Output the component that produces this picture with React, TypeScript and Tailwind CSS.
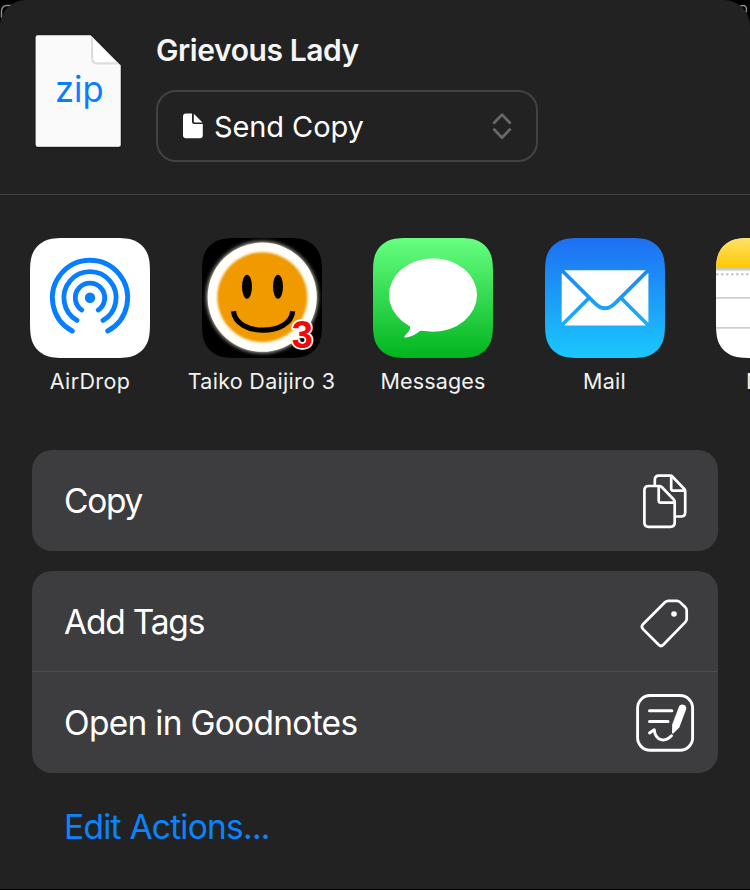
import type { ReactNode } from "react";

// Rounded square with continuous curvature corners.
function squircle(s: number, r: number): string {
  const a = 1.5287 * r, b = 1.0885 * r, c = 0.8684 * r, d = 0.6315 * r;
  const e = 0.0749 * r, f = 0.3728 * r, g = 0.1691 * r;
  return [
    `M${a} 0H${s - a}`,
    `C${s - b} 0 ${s - c} 0 ${s - d} ${e}`,
    `C${s - f} ${g} ${s - g} ${f} ${s - e} ${d}`,
    `C${s} ${c} ${s} ${b} ${s} ${a}V${s - a}`,
    `C${s} ${s - b} ${s} ${s - c} ${s - e} ${s - d}`,
    `C${s - g} ${s - f} ${s - f} ${s - g} ${s - d} ${s - e}`,
    `C${s - c} ${s} ${s - b} ${s} ${s - a} ${s}H${a}`,
    `C${b} ${s} ${c} ${s} ${d} ${s - e}`,
    `C${f} ${s - g} ${g} ${s - f} ${e} ${s - d}`,
    `C0 ${s - c} 0 ${s - b} 0 ${s - a}V${a}`,
    `C0 ${b} 0 ${c} ${e} ${d}`,
    `C${g} ${f} ${f} ${g} ${d} ${e}`,
    `C${c} 0 ${b} 0 ${a} 0Z`,
  ].join("");
}

const tile = squircle(120, 27);

function Tile({ id, children }: { id: string; children: ReactNode }) {
  return (
    <svg width="120" height="120" viewBox="0 0 120 120" className="block shrink-0">
      <defs>
        <clipPath id={id}>
          <path d={tile} />
        </clipPath>
      </defs>
      <g clipPath={`url(#${id})`}>{children}</g>
    </svg>
  );
}

function AirDropIcon() {
  return (
    <Tile id="airdrop">
      <rect width="120" height="120" fill="#fff" />
      <circle cx="60" cy="59.8" r="5.2" fill="#067eff" />
      <g fill="none" stroke="#067eff" strokeWidth="4.9" strokeLinecap="round">
        <path d="M42.3 93A37.6 37.6 0 1 1 77.7 93" />
        <path d="M47 82.4A26.1 26.1 0 1 1 73 82.4" />
        <path d="M51.8 72A14.7 14.7 0 1 1 68.2 72" />
      </g>
    </Tile>
  );
}

function TaikoIcon() {
  return (
    <Tile id="taiko">
      <defs>
        <filter id="glow" x="-20%" y="-20%" width="140%" height="140%">
          <feGaussianBlur stdDeviation="2.2" />
        </filter>
        <filter id="soft" x="-20%" y="-20%" width="140%" height="140%">
          <feGaussianBlur stdDeviation="0.9" />
        </filter>
      </defs>
      <rect width="120" height="120" fill="#000" />
      <circle cx="60.2" cy="59.2" r="55.2" fill="#d8d8d0" filter="url(#glow)" />
      <circle cx="60.2" cy="59.2" r="54.6" fill="#fffef8" />
      <circle cx="60.3" cy="59.2" r="45" fill="#f09a05" filter="url(#soft)" />
      <ellipse cx="45" cy="48.8" rx="5" ry="12" fill="#000" />
      <ellipse cx="76" cy="48.8" rx="5" ry="12" fill="#000" />
      <path d="M31.500 73.300C34 98.500 88.500 98.500 90.700 73.300" fill="none" stroke="#000" strokeWidth="5.2" />
      <text
        x="100.4"
        y="110.2"
        textAnchor="middle"
        fontFamily="'Liberation Sans', Arial, sans-serif"
        fontSize="38"
        fontWeight="700"
        fill="#f60509"
        stroke="#fff"
        strokeWidth="3.4"
        strokeLinejoin="round"
        paintOrder="stroke"
      >
        3
      </text>
    </Tile>
  );
}

function MessagesIcon() {
  return (
    <Tile id="messages">
      <defs>
        <linearGradient id="green" x1="0" y1="0" x2="0" y2="1">
          <stop offset="0" stopColor="#67ff81" />
          <stop offset="1" stopColor="#01b41f" />
        </linearGradient>
      </defs>
      <rect width="120" height="120" fill="url(#green)" />
      <ellipse cx="60" cy="57" rx="44" ry="36.7" fill="#fff" />
      <path d="M36 85.5C38.500 89 37 93 31.700 97.800C30.700 99 31.300 99.800 33 99.500C39 98.600 43.500 95.800 46.500 93.200C48 92.300 49.500 92.300 52 92.800L50 80Z" fill="#fff" />
    </Tile>
  );
}

function MailIcon() {
  return (
    <Tile id="mail">
      <defs>
        <linearGradient id="blue" gradientUnits="userSpaceOnUse" x1="0" y1="0" x2="0" y2="120">
          <stop offset="0" stopColor="#1e6ff2" />
          <stop offset="1" stopColor="#1ac8fd" />
        </linearGradient>
      </defs>
      <rect width="120" height="120" fill="url(#blue)" />
      <rect x="16.7" y="32.3" width="86.7" height="55.2" rx="4" fill="#fff" />
      <g fill="none" strokeWidth="3.8">
        <path stroke="url(#blue)" d="M16 31.500L50 65.300Q60 75 70 65.300L104 31.500" />
        <path stroke="url(#blue)" d="M16 88L43.500 60.500M104 88L76.500 60.500" />
      </g>
    </Tile>
  );
}

function NotesIcon() {
  return (
    <Tile id="notes">
      <defs>
        <linearGradient id="yellow" x1="0" y1="0" x2="0" y2="1">
          <stop offset="0" stopColor="#ffe168" />
          <stop offset="1" stopColor="#ffc800" />
        </linearGradient>
        <linearGradient id="shade" x1="0" y1="0" x2="0" y2="1">
          <stop offset="0" stopColor="#b5b5b5" />
          <stop offset="1" stopColor="#fff" />
        </linearGradient>
      </defs>
      <rect width="120" height="120" fill="#fff" />
      <rect width="120" height="30.3" fill="url(#yellow)" />
      <rect y="30.3" width="120" height="3.5" fill="url(#shade)" />
      <path d="M1.300 36.300H120" stroke="#c4c4c6" strokeWidth="2.6" strokeLinecap="round" strokeDasharray="0 5" />
      <path d="M0 59.800H120M0 89.800H120" stroke="#cfcfd1" strokeWidth="1.7" />
    </Tile>
  );
}

function ZipFile() {
  return (
    <svg width="98" height="124" viewBox="29 29 98 124" className="block shrink-0">
      <defs>
        <filter id="drop" x="-10%" y="-10%" width="120%" height="120%">
          <feDropShadow dx="0" dy="0.5" stdDeviation="1.8" floodColor="#000" floodOpacity="0.55" />
        </filter>
      </defs>
      <path
        d="M37.700 35.300H90.500L120.700 65.400V144.700Q120.700 146.700 118.700 146.700H37.700Q35.700 146.700 35.700 144.700V37.300Q35.700 35.300 37.700 35.300Z"
        fill="#fafafa"
        filter="url(#drop)"
      />
      <path d="M91.800 36.800V59Q91.800 64 97 64H119L120 66Z" fill="#fff" />
      <path d="M92.100 37.500V58.500Q92.100 63.300 97 63.300H118" fill="none" stroke="#dedede" strokeWidth="2.2" />
      <text
        x="55"
        y="101.5"
        fontFamily="Inter, sans-serif"
        fontSize="35.5"
        textLength="48.5"
        lengthAdjust="spacingAndGlyphs"
        fill="#0a7dff"
      >
        zip
      </text>
    </svg>
  );
}

function CopyIcon() {
  return (
    <svg width="60" height="62" viewBox="635 470 60 62" className="block" fill="none" stroke="#fff" strokeWidth="2.7" strokeLinecap="round" strokeLinejoin="round">
      <path d="M654.800 484V480Q654.800 475.700 659 475.700H670.500Q671.500 475.700 672.500 476.700L684.300 489Q685.200 490 685.200 491.500V512.300Q685.200 516.500 681 516.500H677" />
      <path d="M671.200 476.500V488.500Q671.200 490.700 673.400 490.700H684.500" />
      <path d="M659.500 486Q660.700 486 661.700 487L673.500 499.300Q674.700 500.500 674.700 502V522.500Q674.700 526.800 670.400 526.800H648.700Q644.400 526.800 644.400 522.500V490.300Q644.400 486 648.700 486Z" />
      <path d="M658.700 487V500.500Q658.700 502.700 660.900 502.700H674" />
    </svg>
  );
}

function TagIcon() {
  return (
    <svg width="60" height="60" viewBox="635 591.5 60 60" className="block">
      <path
        d="M665.200 602.500Q666.600 601.300 668.400 601.300H676.800Q678.700 601.300 680 602.600L685.300 607.800Q686.700 609.200 686.700 611V619.200Q686.700 621.200 685.300 622.600L663.300 645.300Q661 647.600 658.700 645.300L643 629.600Q640.700 627.200 643 624.800Z"
        fill="none"
        stroke="#fff"
        strokeWidth="2.7"
        strokeLinejoin="round"
      />
      <circle cx="674" cy="614.5" r="2.8" fill="#fff" />
    </svg>
  );
}

function GoodnotesIcon() {
  return (
    <svg width="60" height="60" viewBox="635 693 60 60" className="block" fill="none" stroke="#fff" strokeLinecap="round" strokeLinejoin="round">
      <rect x="637.6" y="695.5" width="55" height="54.8" rx="12.5" strokeWidth="2.9" />
      <path d="M649.500 710.700H671.800M649.500 721.400H668" strokeWidth="3" />
      <path d="M649.500 733L654.200 729.700C655.500 742 665.500 742 671.500 735.800" strokeWidth="2.9" />
      <path d="M678.900 706.800C680 704.200 682.500 704.100 684.500 705.100C686.300 706.100 686.600 707.900 686 709.800L679.300 727.500L673.300 733.400Q672.100 733.900 672 732.400L672.200 724.500Z" fill="#fff" stroke="none" />
    </svg>
  );
}

const apps = [
  { name: "AirDrop", icon: <AirDropIcon />, spacing: "tracking-[0.35px]" },
  { name: "Taiko Daijiro 3", icon: <TaikoIcon />, spacing: "tracking-[0.3px]" },
  { name: "Messages", icon: <MessagesIcon />, spacing: "tracking-[0.15px]" },
  { name: "Mail", icon: <MailIcon />, spacing: "tracking-[0.3px]" },
  { name: "Notes", icon: <NotesIcon />, spacing: "tracking-[0px]" },
];

function Row({ label, icon, className }: { label: ReactNode; icon: ReactNode; className: string }) {
  return (
    <button className={`flex w-full items-center justify-between pl-[32px] pr-[23px] text-left ${className}`}>
      {label}
      {icon}
    </button>
  );
}

export default function App() {
  return (
    <div className="relative h-[890px] w-[750px] overflow-hidden bg-black font-['Inter',sans-serif] text-white">
      <svg className="absolute left-0 top-0" width="750" height="20" fill="none" stroke="#8b8b8d" strokeWidth="1.5">
        <path d="M1.500 18V11Q2 5.500 7 5.500H12" />
        <path d="M740 6Q746 4 746.500 9T742 14" />
      </svg>
      <div className="relative flex h-[889px] flex-col overflow-hidden rounded-t-[26px] bg-[#222222]">
        <header className="flex h-[195px] shrink-0 border-b border-[#424244] pl-[29px] pt-[29px]">
          <ZipFile />
          <div className="ml-[29px] flex flex-col">
            <h1 className="mt-[1px] h-10 whitespace-nowrap text-[30px] font-semibold leading-10 tracking-[-0.42px] text-[#f5f5f5]">
              Grievous Lady
            </h1>
            <button className="mt-[20px] flex h-[72px] w-[382px] items-center rounded-[20px] border-2 border-[#424246] pl-[25px] pr-[24px] text-[29px]">
              <svg width="20" height="26" viewBox="0 0 20 26" fill="#fff">
                <path d="M3 0.500H9V8.500Q9 11 11.500 11H19.800V22.300Q19.800 25.300 16.800 25.300H3Q0 25.300 0 22.300V3.500Q0 0.500 3 0.500Z" />
                <path d="M10.800 0.700L19.500 9.500H12Q10.800 9.500 10.800 8.300Z" />
              </svg>
              <span className="ml-[11px] whitespace-nowrap pt-[2px] tracking-[-0.1px]">Send Copy</span>
              <svg className="ml-auto" width="20" height="28" viewBox="0 0 20 28" fill="none" stroke="#68686b" strokeWidth="2.7" strokeLinecap="round" strokeLinejoin="round">
                <path d="M2.200 10.800L10 2.600L17.800 10.800M2.200 17.500L10 25.700L17.800 17.500" />
              </svg>
            </button>
          </div>
        </header>

        <section className="flex h-[255px] shrink-0 pl-[4.25px] pt-[43px]">
          {apps.map((app) => (
            <div key={app.name} className="flex w-[171.5px] shrink-0 flex-col items-center">
              {app.icon}
              <span className={`mt-[7px] whitespace-nowrap text-[21.5px] leading-8 text-[#f2f2f2] ${app.spacing}`}>{app.name}</span>
            </div>
          ))}
        </section>

        <main className="flex flex-col px-8 text-[33.5px] leading-10">
          <div className="rounded-[20px] bg-[#3d3d3f]">
            <Row label={<span className="tracking-[-1.3px]">Copy</span>} icon={<CopyIcon />} className="h-[101px]" />
          </div>
          <div className="mt-5 overflow-hidden rounded-[20px] bg-[#3d3d3f]">
            <Row
              label={<span className="pt-[1px] tracking-[-1.2px]">Add Tags</span>}
              icon={<TagIcon />}
              className="h-[101px] border-b border-[#4e4e50]"
            />
            <Row label={<span className="tracking-[-0.72px]">Open in Goodnotes</span>} icon={<GoodnotesIcon />} className="h-[101px]" />
          </div>
          <button className="mt-[34px] self-start pl-[32px] tracking-[-0.75px] text-[#0a84ff]">Edit Actions...</button>
        </main>
      </div>
    </div>
  );
}
